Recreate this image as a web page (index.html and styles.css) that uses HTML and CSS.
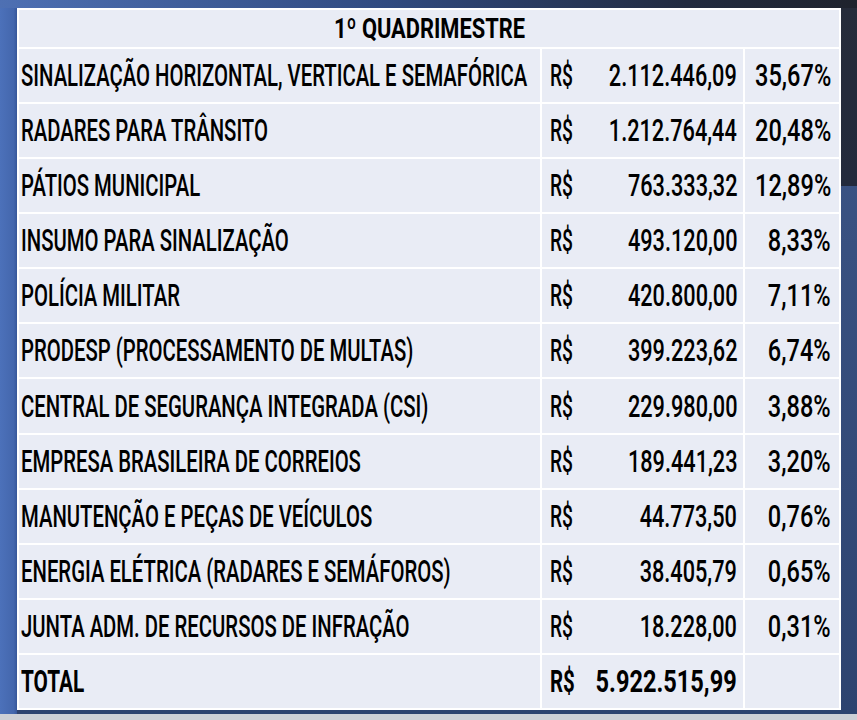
FILE: index.html
```html
<!DOCTYPE html>
<html lang="pt-BR">
<head>
<meta charset="utf-8">
<title>1º Quadrimestre</title>
<link rel="stylesheet" href="styles.css">
</head>
<body>
<div class="slide">
  <table class="tbl">
    <colgroup>
      <col class="c-label"><col class="c-cur"><col class="c-val"><col class="c-pct">
    </colgroup>
    <thead>
      <tr class="head"><th colspan="4"><div class="cell ctr"><span class="t th">1º QUADRIMESTRE</span></div></th></tr>
    </thead>
    <tbody>
      <tr><td class="lab"><div class="cell"><span class="t tl">SINALIZAÇÃO HORIZONTAL, VERTICAL E SEMAFÓRICA</span></div></td><td class="cur"><div class="cell"><span class="t tc">R$</span></div></td><td class="val"><div class="cell end"><span class="t tn">2.112.446,09</span></div></td><td class="pct"><div class="cell end"><span class="t tp">35,67%</span></div></td></tr>
      <tr><td class="lab"><div class="cell"><span class="t tl">RADARES PARA TRÂNSITO</span></div></td><td class="cur"><div class="cell"><span class="t tc">R$</span></div></td><td class="val"><div class="cell end"><span class="t tn">1.212.764,44</span></div></td><td class="pct"><div class="cell end"><span class="t tp">20,48%</span></div></td></tr>
      <tr><td class="lab"><div class="cell"><span class="t tl">PÁTIOS MUNICIPAL</span></div></td><td class="cur"><div class="cell"><span class="t tc">R$</span></div></td><td class="val"><div class="cell end"><span class="t tn">763.333,32</span></div></td><td class="pct"><div class="cell end"><span class="t tp">12,89%</span></div></td></tr>
      <tr><td class="lab"><div class="cell"><span class="t tl">INSUMO PARA SINALIZAÇÃO</span></div></td><td class="cur"><div class="cell"><span class="t tc">R$</span></div></td><td class="val"><div class="cell end"><span class="t tn">493.120,00</span></div></td><td class="pct"><div class="cell end"><span class="t tp">8,33%</span></div></td></tr>
      <tr><td class="lab"><div class="cell"><span class="t tl">POLÍCIA MILITAR</span></div></td><td class="cur"><div class="cell"><span class="t tc">R$</span></div></td><td class="val"><div class="cell end"><span class="t tn">420.800,00</span></div></td><td class="pct"><div class="cell end"><span class="t tp">7,11%</span></div></td></tr>
      <tr><td class="lab"><div class="cell"><span class="t tl">PRODESP (PROCESSAMENTO DE MULTAS)</span></div></td><td class="cur"><div class="cell"><span class="t tc">R$</span></div></td><td class="val"><div class="cell end"><span class="t tn">399.223,62</span></div></td><td class="pct"><div class="cell end"><span class="t tp">6,74%</span></div></td></tr>
      <tr><td class="lab"><div class="cell"><span class="t tl">CENTRAL DE SEGURANÇA INTEGRADA (CSI)</span></div></td><td class="cur"><div class="cell"><span class="t tc">R$</span></div></td><td class="val"><div class="cell end"><span class="t tn">229.980,00</span></div></td><td class="pct"><div class="cell end"><span class="t tp">3,88%</span></div></td></tr>
      <tr><td class="lab"><div class="cell"><span class="t tl">EMPRESA BRASILEIRA DE CORREIOS</span></div></td><td class="cur"><div class="cell"><span class="t tc">R$</span></div></td><td class="val"><div class="cell end"><span class="t tn">189.441,23</span></div></td><td class="pct"><div class="cell end"><span class="t tp">3,20%</span></div></td></tr>
      <tr><td class="lab"><div class="cell"><span class="t tl">MANUTENÇÃO E PEÇAS DE VEÍCULOS</span></div></td><td class="cur"><div class="cell"><span class="t tc">R$</span></div></td><td class="val"><div class="cell end"><span class="t tn">44.773,50</span></div></td><td class="pct"><div class="cell end"><span class="t tp">0,76%</span></div></td></tr>
      <tr><td class="lab"><div class="cell"><span class="t tl">ENERGIA ELÉTRICA (RADARES E SEMÁFOROS)</span></div></td><td class="cur"><div class="cell"><span class="t tc">R$</span></div></td><td class="val"><div class="cell end"><span class="t tn">38.405,79</span></div></td><td class="pct"><div class="cell end"><span class="t tp">0,65%</span></div></td></tr>
      <tr><td class="lab"><div class="cell"><span class="t tl">JUNTA ADM. DE RECURSOS DE INFRAÇÃO</span></div></td><td class="cur"><div class="cell"><span class="t tc">R$</span></div></td><td class="val"><div class="cell end"><span class="t tn">18.228,00</span></div></td><td class="pct"><div class="cell end"><span class="t tp">0,31%</span></div></td></tr>
      <tr class="total"><td class="lab"><div class="cell"><span class="t tl">TOTAL</span></div></td><td class="cur"><div class="cell"><span class="t tc">R$</span></div></td><td class="val"><div class="cell end"><span class="t tn">5.922.515,99</span></div></td><td class="pct"><div class="cell end"></div></td></tr>
    </tbody>
  </table>
</div>
</body>
</html>
```

FILE: styles.css
```css
html, body {
  margin: 0;
  padding: 0;
}
body {
  width: 857px;
  height: 720px;
  overflow: hidden;
  background: #cdd0d6;
  font-family: Roboto, "Liberation Sans", sans-serif;
  color: #000;
}
.slide {
  width: 857px;
  height: 714px;
  box-sizing: border-box;
  padding: 8px 18px 4px 17px;
  background:
    linear-gradient(to right, #4e70b3 0%, #304a80 45%, #222b40 80%, #1f232d 100%) top left / 100% 8px no-repeat,
    linear-gradient(to bottom, #262c3a 0%, #232a3c 100%) top right / 18px 186px no-repeat,
    linear-gradient(to right, #4c71ba 0%, #4467ad 80%, #36579a 100%) top left / 17px 100% no-repeat,
    linear-gradient(to bottom, #3e5789 0%, #2d436f 100%);
}
.tbl {
  width: 822px;
  height: 702px;
  border-collapse: collapse;
  table-layout: fixed;
  background: #e9ecf5;
}
.c-label { width: 523px; }
.c-cur { width: 50px; }
.c-val { width: 153px; }
.c-pct { width: 96px; }

.tbl th, .tbl td {
  border: 2px solid #ffffff;
  padding: 0;
  vertical-align: middle;
  white-space: nowrap;
}
.tbl tr.head { height: 39px; }
.tbl tbody tr { height: 55px; }
.tbl td.cur { border-right: hidden; }
.tbl td.val { border-left: hidden; }

.cell {
  display: flex;
  align-items: center;
  white-space: nowrap;
}
.lab .cell { padding-left: 2px; }
.cur .cell { padding-left: 8px; }
.val .cell { padding-right: 6px; }
.pct .cell { padding-right: 8px; }
.end { justify-content: flex-end; }
.ctr { justify-content: center; }

.t {
  display: block;
  flex: none;
  font-size: 31px;
  line-height: 1;
  font-weight: 500;
  transform-origin: left center;
}
.end .t { transform-origin: right center; }
.ctr .t { transform-origin: center center; }

.tl { transform: scaleX(0.655); }
.tc { transform: scaleX(0.62); }
.tn { transform: scaleX(0.7); }
.tp { transform: scaleX(0.76); }

.th {
  font-size: 28px;
  font-weight: 700;
  transform: scaleX(0.78);
}
.total .t { font-weight: 700; }
.total .tl { transform: scaleX(0.67); }
.total .tc { transform: scaleX(0.66); }
.total .tn { transform: scaleX(0.76); }
```
